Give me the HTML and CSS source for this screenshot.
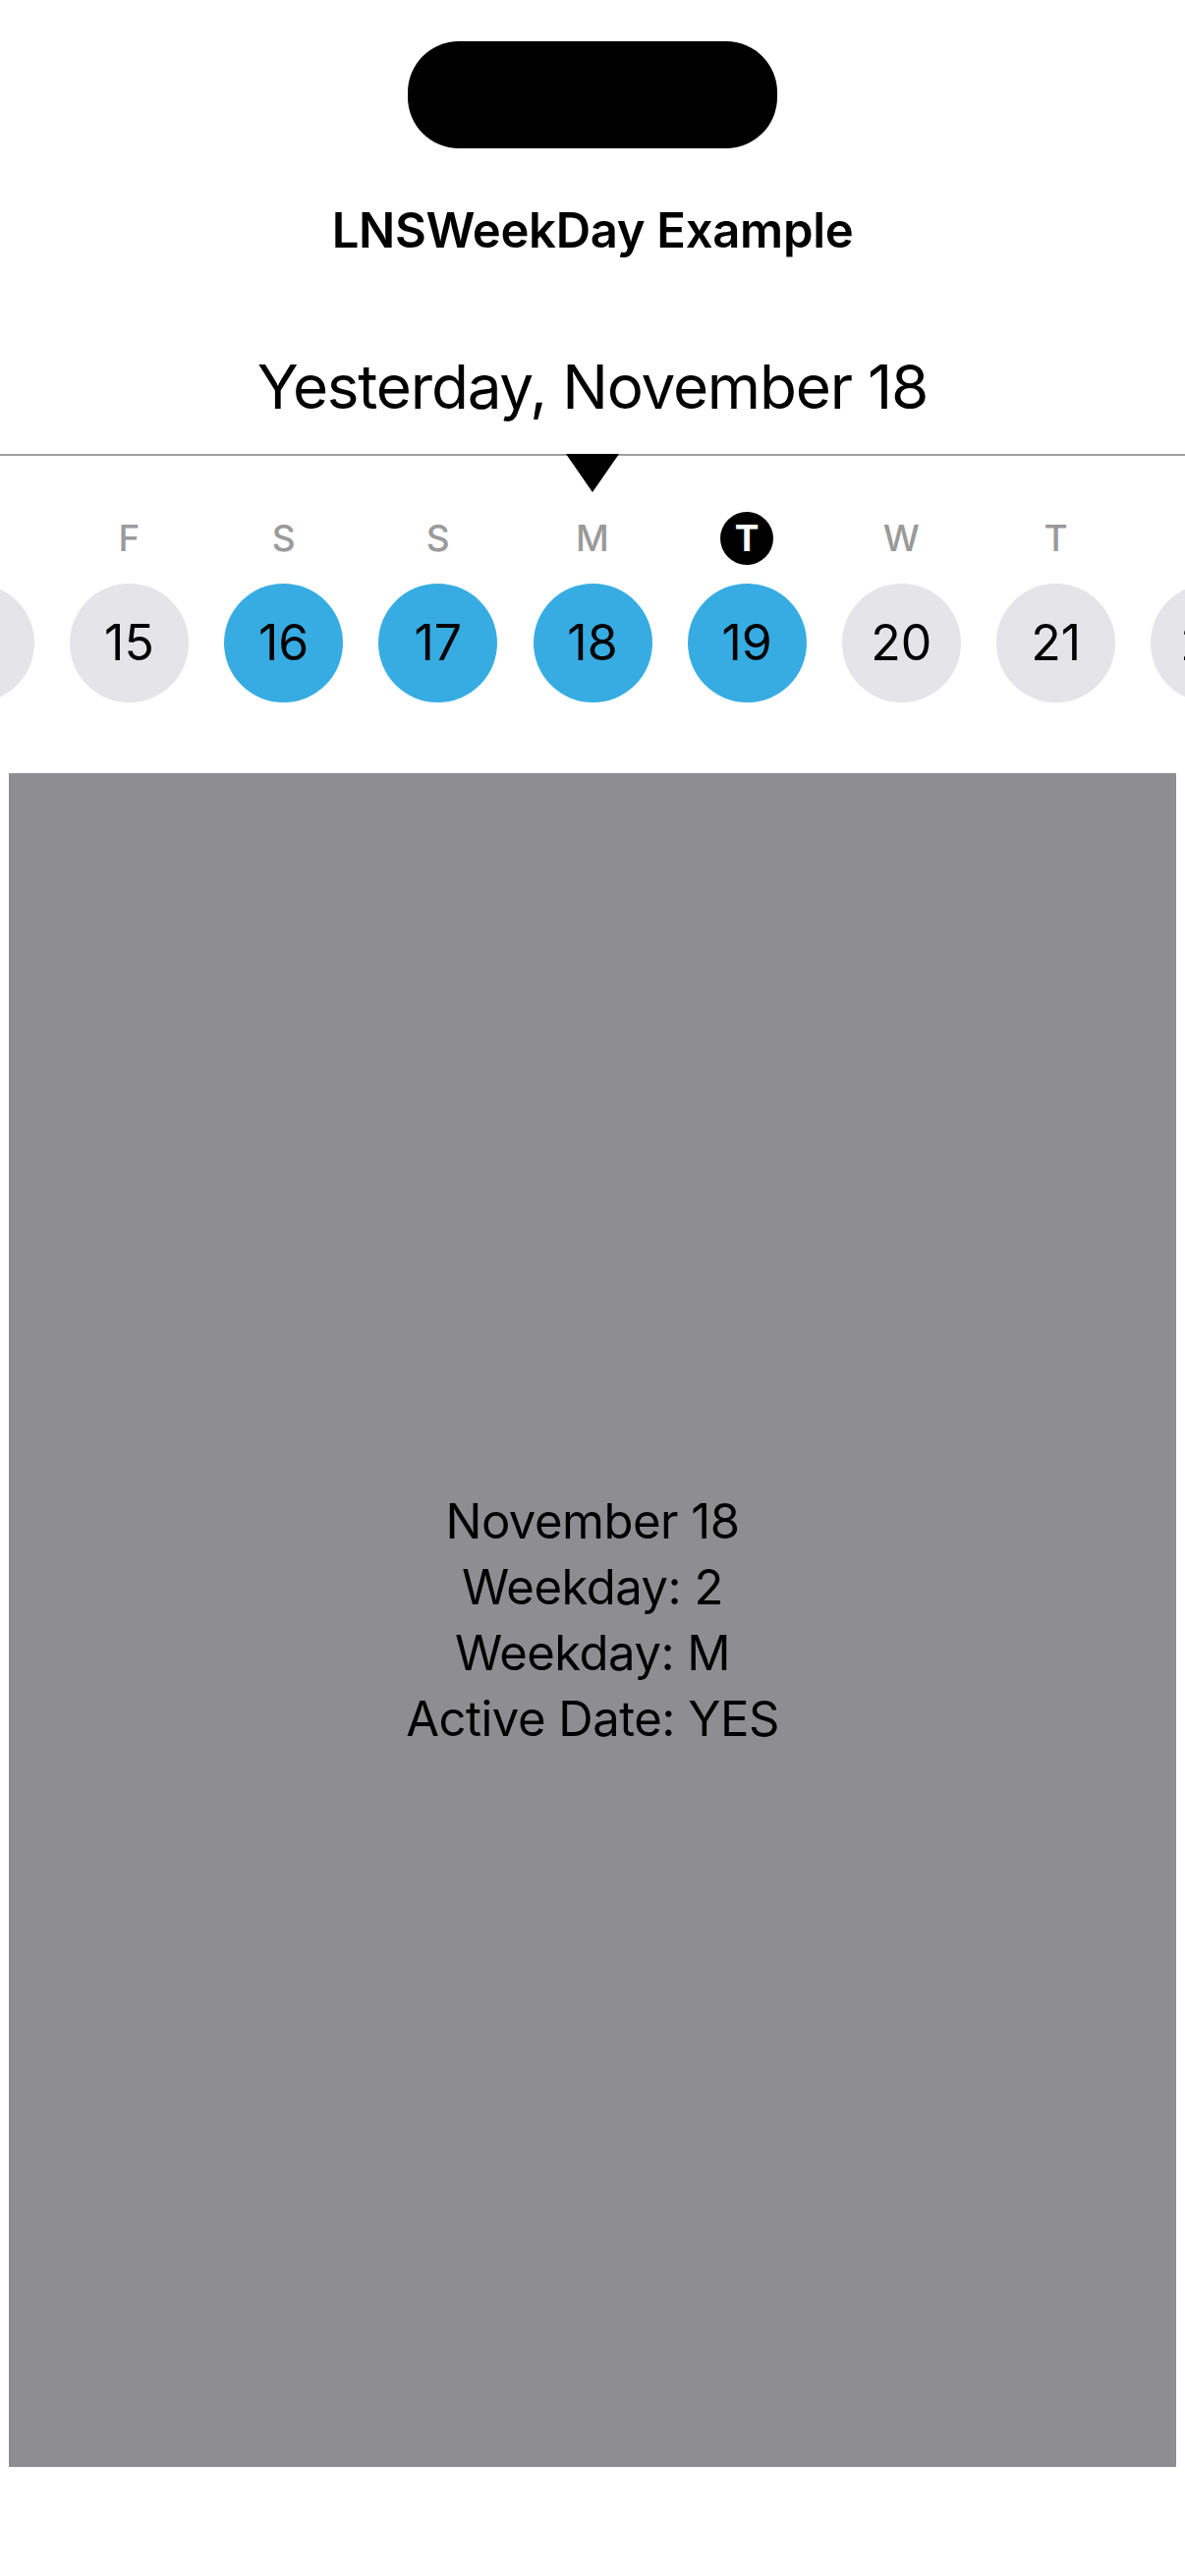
FILE: index.html
```html
<!DOCTYPE html>
<html lang="en">
<head>
<meta charset="utf-8">
<title>LNSWeekDay Example</title>
<link rel="stylesheet" href="styles.css">
</head>
<body>
<div class="screen">
  <div class="island"></div>
  <header class="nav"><h1 class="nav-title">LNSWeekDay Example</h1></header>
  <div class="date-title">Yesterday, November 18</div>
  <section class="week">
    <div class="divider"><div class="pointer"></div></div>
    <div class="days">
      <div class="day"><span class="wd">T</span><span class="num">14</span></div>
      <div class="day"><span class="wd">F</span><span class="num">15</span></div>
      <div class="day"><span class="wd">S</span><span class="num active">16</span></div>
      <div class="day"><span class="wd">S</span><span class="num active">17</span></div>
      <div class="day"><span class="wd">M</span><span class="num active">18</span></div>
      <div class="day"><span class="wd today">T</span><span class="num active">19</span></div>
      <div class="day"><span class="wd">W</span><span class="num">20</span></div>
      <div class="day"><span class="wd">T</span><span class="num">21</span></div>
      <div class="day"><span class="wd">F</span><span class="num">22</span></div>
    </div>
  </section>
  <main class="panel">
    <div class="info">
      <div>November 18</div>
      <div>Weekday: 2</div>
      <div>Weekday: M</div>
      <div>Active Date: YES</div>
    </div>
  </main>
</div>
</body>
</html>
```

FILE: styles.css
```css
* { box-sizing: border-box; }
html, body { margin: 0; padding: 0; background: #ffffff; }
body {
  width: 1206px;
  height: 2622px;
  overflow: hidden;
  font-family: Inter, "Noto Sans", "Liberation Sans", sans-serif;
  color: #000;
}
.screen {
  display: flex;
  flex-direction: column;
  align-items: stretch;
  width: 1206px;
  height: 2622px;
}
.island {
  align-self: center;
  width: 376px;
  height: 109px;
  margin-top: 42px;
  background: #000;
  border-radius: 52px;
}
.nav {
  margin-top: 49px;
  height: 70px;
  display: flex;
  justify-content: center;
  align-items: center;
}
.nav-title {
  margin: 0;
  font-size: 49px;
  font-weight: 600;
  line-height: 70px;
  letter-spacing: -0.3px;
}
.date-title {
  margin-top: 84px;
  height: 80px;
  line-height: 80px;
  text-align: center;
  font-size: 62px;
  font-weight: 400;
  letter-spacing: -1.2px;
}
.week {
  margin-top: 28px;
  display: flex;
  flex-direction: column;
}
.divider {
  position: relative;
  height: 2px;
  background: #9e9e9e;
}
.pointer {
  position: absolute;
  left: 576px;
  top: 0;
  width: 0;
  height: 0;
  border-left: 27px solid transparent;
  border-right: 27px solid transparent;
  border-top: 39px solid #000;
}
.days {
  display: flex;
  justify-content: center;
  overflow: hidden;
  margin-top: 57px;
}
.day {
  flex: 0 0 157.2px;
  display: flex;
  flex-direction: column;
  align-items: center;
}
.wd {
  width: 54px;
  height: 54px;
  line-height: 54px;
  text-align: center;
  border-radius: 50%;
  font-size: 37px;
  font-weight: 500;
  color: #9a9a9a;
}
.wd.today {
  background: #000;
  color: #fff;
  font-weight: 700;
}
.num {
  margin-top: 19px;
  width: 121px;
  height: 121px;
  line-height: 121px;
  text-align: center;
  border-radius: 50%;
  background: #e4e4e9;
  font-size: 50px;
  font-weight: 400;
  color: #000;
}
.num.active { background: #36ace3; }
.panel {
  margin: 72px 9px 0 9px;
  height: 1724px;
  background: #8e8d92;
  display: flex;
  align-items: center;
  justify-content: center;
}
.info {
  text-align: center;
  font-size: 49px;
  line-height: 67px;
  font-weight: 400;
  letter-spacing: -0.5px;
  color: #000;
}
```
